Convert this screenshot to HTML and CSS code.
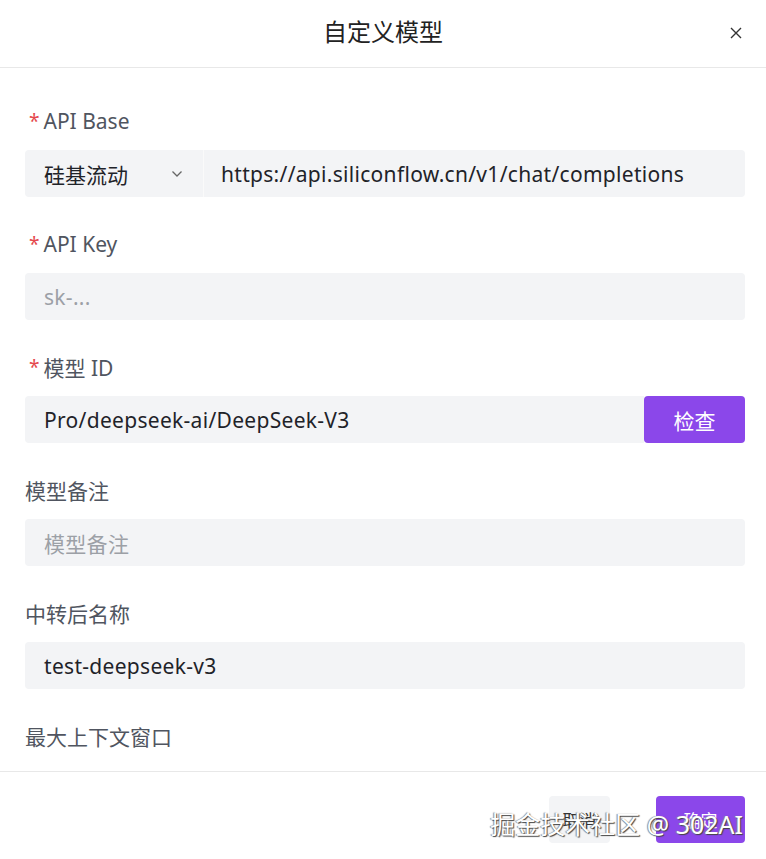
FILE: index.html
```html
<!DOCTYPE html>
<html lang="zh">
<head>
  <meta charset="UTF-8" />
  <meta name="viewport" content="width=device-width, initial-scale=1.0"/>
  <title>自定义模型</title>
  <link rel="stylesheet" href="styles.css">
</head>
<body>
  <div class="modal">
    <div class="modal-header">
      <h1>自定义模型</h1>
      <button class="close" aria-label="关闭">
        <svg width="12" height="12" viewBox="0 0 12 12"><path d="M1 1L11 11M11 1L1 11" stroke="#333" stroke-width="1.4" fill="none"/></svg>
      </button>
    </div>

    <div class="modal-body">
      <div class="field">
        <label><span class="req">*</span>API Base</label>
        <div class="group">
          <div class="select">
            <span>硅基流动</span>
            <svg width="12" height="8" viewBox="0 0 12 8"><path d="M1.5 1.5L6 6L10.5 1.5" stroke="#666" stroke-width="1.3" fill="none"/></svg>
          </div>
          <div class="input grow">https://api.siliconflow.cn/v1/chat/completions</div>
        </div>
      </div>

      <div class="field">
        <label><span class="req">*</span>API Key</label>
        <div class="input placeholder">sk-...</div>
      </div>

      <div class="field">
        <label><span class="req">*</span>模型 ID</label>
        <div class="group">
          <div class="input grow">Pro/deepseek-ai/DeepSeek-V3</div>
          <button class="btn primary check">检查</button>
        </div>
      </div>

      <div class="field">
        <label>模型备注</label>
        <div class="input placeholder">模型备注</div>
      </div>

      <div class="field">
        <label>中转后名称</label>
        <div class="input">test-deepseek-v3</div>
      </div>

      <div class="field">
        <label>最大上下文窗口</label>
      </div>
    </div>

    <div class="modal-footer">
      <button class="btn ghost">取消</button>
      <button class="btn primary">确定</button>
      <div class="watermark">掘金技术社区 @ 302AI</div>
    </div>
  </div>
</body>
</html>
```

FILE: styles.css
```css
body {
  margin: 0;
  background: #fff;
  font-family: 'Noto Sans', 'Noto Sans CJK SC', sans-serif;
  color: #1f2329;
}

.modal {
  width: 766px;
  height: 859px;
  display: flex;
  flex-direction: column;
  overflow: hidden;
}

.modal-header {
  height: 67px;
  flex-shrink: 0;
  display: flex;
  align-items: center;
  justify-content: center;
  position: relative;
  border-bottom: 1px solid #e8e8e8;
}

.modal-header h1 {
  margin: -6px 0 0;
  font-size: 24px;
  font-weight: 400;
  color: #222;
}

.close {
  position: absolute;
  right: 24px;
  top: 27px;
  border: none;
  background: none;
  padding: 0;
  width: 12px;
  height: 12px;
  display: flex;
  cursor: pointer;
}

.modal-body {
  flex: 1;
  overflow: hidden;
  padding: 38px 21px 0 25px;
}

.field {
  margin-bottom: 32px;
}

label {
  display: flex;
  align-items: center;
  height: 30px;
  margin-bottom: 14px;
  font-size: 21px;
  color: #505560;
}

.req {
  color: #e5484d;
  font-size: 19px;
  margin: 0 4px 0 4px;
}

.group {
  display: flex;
}

.input, .select {
  height: 47px;
  box-sizing: border-box;
  background: #f3f4f6;
  border-radius: 4px;
  padding: 0 19px;
  display: flex;
  align-items: center;
  font-size: 21px;
  color: #1f2329;
  white-space: nowrap;
}

.input { letter-spacing: 0.3px; }

.grow { flex: 1; }

.placeholder { color: #9ca0a6; }

.select {
  width: 179px;
  justify-content: space-between;
  padding-right: 20px;
  border-radius: 4px 0 0 4px;
  border-right: 1px solid #fafafa;
}

.select + .input {
  border-radius: 0 4px 4px 0;
  padding-left: 17px;
}

.btn {
  height: 47px;
  border: none;
  border-radius: 4px;
  font-family: inherit;
  font-size: 21px;
  cursor: pointer;
}

.primary {
  background: #8b47ea;
  color: #fff;
}

.check {
  width: 101px;
}

.group .input:has(+ .check) {
  border-radius: 4px 0 0 4px;
}

.modal-footer {
  height: 88px;
  flex-shrink: 0;
  box-sizing: border-box;
  border-top: 1px solid #e8e8e8;
  display: flex;
  justify-content: flex-end;
  align-items: flex-start;
  padding: 24px 21px 0 0;
  gap: 46px;
  position: relative;
}

.modal-footer .btn {
  width: 61px;
  font-size: 17px;
}

.modal-footer .primary { width: 89px; }

.ghost {
  background: #f3f4f6;
  color: #333;
}

.watermark {
  position: absolute;
  right: 23px;
  top: 33px;
  font-size: 25px;
  color: #fff;
  text-shadow: 1px 1px 1px #444, -1px 0 1px #888;
  pointer-events: none;
}
```
